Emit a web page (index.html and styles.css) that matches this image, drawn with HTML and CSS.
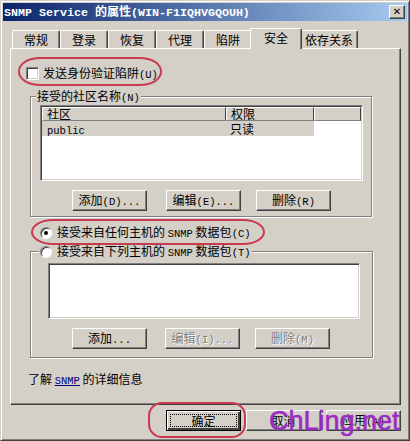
FILE: index.html
```html
<!DOCTYPE html>
<html lang="zh-CN">
<head>
    <meta charset="UTF-8">
    <title>SNMP Service 的属性</title>
    <link rel="stylesheet" href="styles.css">
</head>
<body>
    <div class="window">
        <!-- Title bar -->
        <div class="titlebar">
            <span class="title"><span class="m">SNMP Service </span>的属性<span class="m">(WIN-F1IQHVGQOUH)</span></span>
            <span class="close">&#x2715;</span>
        </div>

        <div class="content">
            <!-- Tabs -->
            <div class="tabs">
                <div class="tab">常规</div>
                <div class="tab">登录</div>
                <div class="tab">恢复</div>
                <div class="tab">代理</div>
                <div class="tab">陷阱</div>
                <div class="tab selected">安全</div>
                <div class="tab last">依存关系</div>
            </div>

            <div class="panel">
                <div class="check-row">
                    <span class="checkbox"></span>
                    <span>发送身份验证陷阱<span class="m">(U)</span></span>
                </div>

                <div class="group group-community">
                    <span class="legend">接受的社区名称<span class="m">(N)</span></span>
                    <div class="listview">
                        <div class="lv-header">
                            <div class="hcell col1">社区</div>
                            <div class="hcell col2">权限</div>
                            <div class="hcell col3"></div>
                        </div>
                        <div class="lv-row">
                            <div class="cell col1"><span class="m">public</span></div>
                            <div class="cell col2">只读</div>
                        </div>
                    </div>
                    <div class="btn-row">
                        <button class="btn b1">添加<span class="m">(D)...</span></button>
                        <button class="btn b2">编辑<span class="m">(E)...</span></button>
                        <button class="btn b3">删除<span class="m">(R)</span></button>
                    </div>
                </div>

                <div class="radio-row">
                    <span class="radio checked"></span>
                    <span>接受来自任何主机的 <span class="m">SNMP</span> 数据包<span class="m">(C)</span></span>
                </div>

                <div class="group group-hosts">
                    <span class="legend radio-legend">
                        <span class="radio"></span>
                        <span>接受来自下列主机的 <span class="m">SNMP</span> 数据包<span class="m">(T)</span></span>
                    </span>
                    <div class="listbox"></div>
                    <div class="btn-row">
                        <button class="btn b1">添加<span class="m">...</span></button>
                        <button class="btn b2 alt disabled">编辑<span class="m">(I)...</span></button>
                        <button class="btn b3 disabled">删除<span class="m">(M)</span></button>
                    </div>
                </div>

                <div class="more">了解 <a class="link m">SNMP</a> 的详细信息</div>
            </div>

            <div class="footer">
                <button class="btn default">确定</button>
                <button class="btn">取消</button>
                <button class="btn">应用<span class="m">(A)</span></button>
            </div>
        </div>

        <!-- annotations drawn over the screenshot -->
        <div class="mark mark-check"></div>
        <div class="mark mark-radio"></div>
        <div class="mark mark-ok"></div>
        <div class="watermark">ChLing.net</div>
    </div>
</body>
</html>
```

FILE: styles.css
```css
body {
    margin: 0;
    background: #d4d0c8;
    font-family: "Noto Sans CJK SC", sans-serif;
    font-size: 12px;
    line-height: 14px;
    color: #000;
}
.m {
    font-family: "Liberation Mono", monospace;
    font-size: 10.5px;
}
.window {
    position: relative;
    width: 410px;
    height: 441px;
    box-sizing: border-box;
    border: 1px solid;
    border-color: #d4d0c8 #404040 #404040 #d4d0c8;
    box-shadow: inset 1px 1px #fff, inset -1px -1px #808080;
    padding: 2px;
    background: #d4d0c8;
    overflow: hidden;
}

/* title bar */
.titlebar {
    height: 18px;
    display: flex;
    align-items: center;
    padding: 0 2px 0 1px;
    background: linear-gradient(to right, #0a246a, #a6caf0);
    color: #fff;
    font-weight: bold;
}
.title { white-space: nowrap; }
.title .m {
    font-size: 11.67px;
    font-weight: bold;
}
.close {
    margin-left: auto;
    width: 16px;
    height: 14px;
    box-sizing: border-box;
    background: #d4d0c8;
    border: 1px solid;
    border-color: #fff #404040 #404040 #fff;
    box-shadow: inset -1px -1px #808080;
    color: #000;
    font-size: 10px;
    line-height: 11px;
    text-align: center;
    font-family: "DejaVu Sans", sans-serif;
}

.content { padding: 7px 0 0 7px; }

/* tabs */
.tabs {
    display: flex;
    align-items: flex-end;
    margin-left: 2px;
    height: 20px;
}
.tab {
    width: 48px;
    height: 18px;
    box-sizing: border-box;
    border-top: 1px solid #fff;
    border-left: 1px solid #fff;
    border-right: 1px solid #404040;
    box-shadow: inset -1px 0 #808080;
    border-radius: 2px 2px 0 0;
    text-align: center;
    line-height: 17px;
}
.tab.selected {
    position: relative;
    z-index: 1;
    width: 52px;
    height: 21px;
    margin: 0 -2px -1px;
    background: #d4d0c8;
    line-height: 18px;
}
.tab.last { width: 58px; }

.panel {
    width: 391px;
    height: 357px;
    box-sizing: border-box;
    border: 1px solid;
    border-color: #fff #404040 #404040 #fff;
    box-shadow: inset -1px -1px #808080;
}

/* checkbox / radio */
.check-row {
    display: flex;
    align-items: center;
    gap: 4px;
    height: 13px;
    margin: 18px 0 0 15px;
}
.checkbox {
    width: 13px;
    height: 13px;
    box-sizing: border-box;
    background: #fff;
    border: 1px solid;
    border-color: #808080 #fff #fff #808080;
    box-shadow: inset 1px 1px #404040, inset -1px -1px #d4d0c8;
}
.radio-row {
    display: flex;
    align-items: center;
    gap: 5px;
    height: 13px;
    margin: 9px 0 0 29px;
}
.radio {
    display: inline-block;
    width: 12px;
    height: 12px;
    box-sizing: border-box;
    border-radius: 50%;
    background: #fff;
    border: 1px solid;
    border-color: #808080 #fff #fff #808080;
    box-shadow: inset 1px 1px #404040;
    position: relative;
    flex: none;
}
.radio.checked::after {
    content: "";
    position: absolute;
    left: 3px;
    top: 3px;
    width: 4px;
    height: 4px;
    border-radius: 50%;
    background: #000;
}

/* group boxes */
.group {
    position: relative;
    margin-left: 19px;
    box-sizing: border-box;
    border: 1px solid #808080;
    box-shadow: inset 1px 1px #fff, 1px 1px #fff;
}
.group-community {
    width: 342px;
    height: 121px;
    margin-top: 16px;
}
.group-hosts {
    width: 343px;
    height: 107px;
    margin-top: 12px;
}
.legend {
    position: absolute;
    top: -8px;
    left: 5px;
    padding: 0 1px;
    background: #d4d0c8;
    white-space: nowrap;
}
.radio-legend {
    left: 8px;
    display: flex;
    align-items: center;
    gap: 5px;
}

/* list view */
.listview {
    width: 323px;
    height: 76px;
    margin: 8px 0 0 9px;
    box-sizing: border-box;
    padding: 1px;
    background: #fff;
    border: 1px solid;
    border-color: #808080 #fff #fff #808080;
    box-shadow: inset 1px 1px #404040, inset -1px -1px #d4d0c8;
}
.lv-header, .lv-row { display: flex; }
.hcell {
    height: 14px;
    box-sizing: border-box;
    background: #d4d0c8;
    border-top: 1px solid #fff;
    border-left: 1px solid #fff;
    border-right: 1px solid #404040;
    border-bottom: 1px solid #808080;
    padding-left: 4px;
    line-height: 12px;
}
.col1 { width: 184px; }
.col2 { width: 88px; }
.col3 { flex: 1; }
.lv-row .cell {
    height: 15px;
    background: #d4d0c8;
    padding-left: 5px;
    box-sizing: border-box;
    line-height: 15px;
}
.lv-row .col2 { padding-left: 4px; }

.listbox {
    width: 312px;
    height: 56px;
    margin: 11px 0 0 17px;
    box-sizing: border-box;
    background: #fff;
    border: 1px solid;
    border-color: #808080 #fff #fff #808080;
    box-shadow: inset 1px 1px #404040, inset -1px -1px #d4d0c8;
}

/* buttons */
.btn-row {
    display: flex;
    margin-top: 9px;
}
.btn {
    width: 75px;
    height: 21px;
    padding: 0;
    box-sizing: border-box;
    background: #d4d0c8;
    border: 1px solid;
    border-color: #fff #404040 #404040 #fff;
    box-shadow: inset -1px -1px #808080;
    font-family: "Noto Sans CJK SC", sans-serif;
    font-size: 12px;
    line-height: 17px;
    color: #000;
}
.b1 { margin-left: 41px; }
.b2 { margin-left: 19px; }
.b2.alt { margin-left: 18px; }
.b3 { margin-left: 15px; }
.btn.disabled {
    color: #808080;
    text-shadow: 1px 1px #fff;
}
.btn.default {
    border: 1px solid #000;
    box-shadow: inset 1px 1px #fff, inset -2px -2px #404040, inset -1px -1px #808080;
    outline: 1px dotted #000;
    outline-offset: -5px;
}

.more {
    margin: 14px 0 0 17px;
}
.link {
    color: #000080;
    text-decoration: underline;
}

.footer {
    width: 391px;
    display: flex;
    justify-content: flex-end;
    gap: 5px;
    margin-top: 5px;
}

/* red marks and watermark */
.mark {
    position: absolute;
    box-sizing: border-box;
    border: 2px solid #c83a4e;
}
.mark-check {
    left: 17px;
    top: 56px;
    width: 144px;
    height: 29px;
    border-radius: 22px / 14px;
}
.mark-radio {
    left: 30px;
    top: 218px;
    width: 234px;
    height: 26px;
    border-radius: 22px / 13px;
}
.mark-ok {
    left: 147px;
    top: 401px;
    width: 98px;
    height: 36px;
    border-radius: 14px;
}
.watermark {
    position: absolute;
    left: 268px;
    top: 407px;
    font-family: "Liberation Sans", sans-serif;
    font-size: 27px;
    line-height: 27px;
    color: rgb(155, 45, 195);
    -webkit-text-stroke: 0.6px rgb(155, 45, 195);
    white-space: nowrap;
}
```
